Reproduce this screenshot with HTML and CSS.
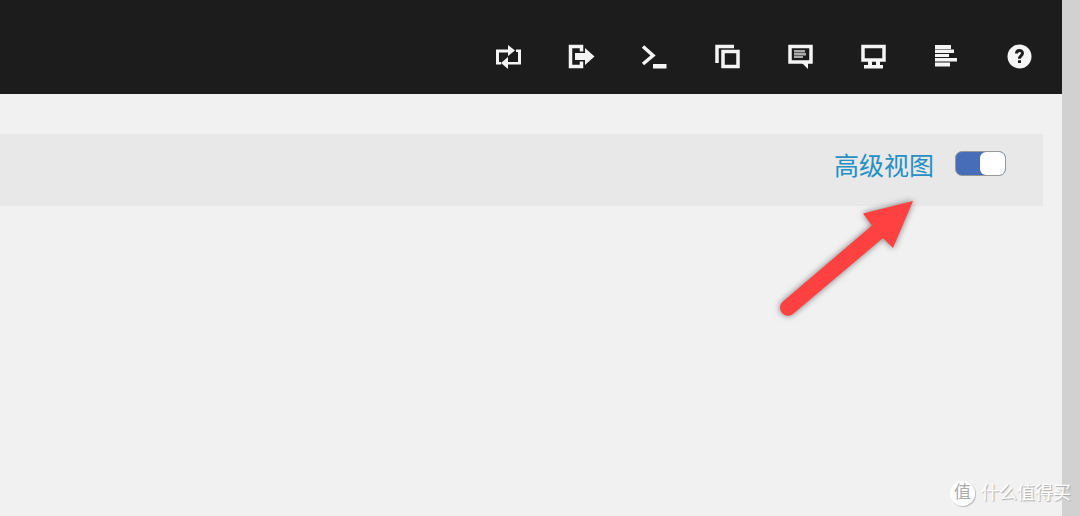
FILE: index.html
```html
<!DOCTYPE html>
<html lang="zh-CN">
<head>
    <meta charset="UTF-8">
    <meta name="viewport" content="width=device-width, initial-scale=1.0">
    <title>高级视图</title>
    <link rel="stylesheet" href="styles.css">
</head>
<body>
    <div class="page">
        <header class="header">
            <button type="button" class="icon-btn" aria-label="切换">
                <svg viewBox="0 0 26 26"><path d="M1 6.500h12V2l7 5.500-7 5.500V9.500H4V19h2v2.500H1zM26 21.500H13V26l-7-6 7-6v5h10V9h-2V6.500h5z"/></svg>
            </button>
            <button type="button" class="icon-btn" aria-label="退出">
                <svg viewBox="0 0 26 26"><path class="line" d="M13.500 8.500V3.500H2.500V23.500H13.500V18.500"/><path d="M7 10h10V5l9.500 8.500L17 22v-5H7z"/></svg>
            </button>
            <button type="button" class="icon-btn" aria-label="终端">
                <svg viewBox="0 0 26 26"><path class="line" d="M2 3.500L12 12.500 2 21"/><path d="M12 21h13.500v4.500H12z"/></svg>
            </button>
            <button type="button" class="icon-btn" aria-label="复制">
                <svg viewBox="0 0 26 26"><path class="line" d="M3 20V3.500H20M9 8.500h15v15H9z"/></svg>
            </button>
            <button type="button" class="icon-btn" aria-label="反馈">
                <svg viewBox="0 0 26 26"><path class="line" d="M3 3.500h21v15.500H3z"/><path d="M14 19h7v7z"/><path class="dim" d="M7 7h11v2.500H7zM7 10h12v2.500H7zM7 13h9v2H7z"/></svg>
            </button>
            <button type="button" class="icon-btn" aria-label="信息">
                <svg viewBox="0 0 26 26"><path class="line" d="M3 3.500h21v13.500H3z"/><path d="M8 18h4v4h4v-4h4v4h3v3.500H4V22h4z"/></svg>
            </button>
            <button type="button" class="icon-btn" aria-label="日志">
                <svg viewBox="0 0 26 26"><path d="M2 2h16v4H2zM2 6.500h19V10H2zM2 11h14v3H2zM2 15h22v3.500H2zM2 19.500h15v4H2z"/></svg>
            </button>
            <button type="button" class="icon-btn" aria-label="帮助">
                <svg viewBox="0 0 26 26"><circle cx="13.500" cy="13.500" r="12"/><path class="mark" d="M10.500 10.500C10.500 6.500 16.500 6.500 16.500 10.200C16.500 12.500 13.500 12.700 13.500 15.700M13.500 17.300V20"/></svg>
            </button>
        </header>
        <main class="content">
            <div class="view-bar">
                <label for="advanced-view">高级视图</label>
                <input type="checkbox" id="advanced-view" class="switch" checked>
            </div>
        </main>
    </div>
    <div class="scrollbar"></div>

    <!-- arrow pointing at the switch -->
    <svg class="pointer" viewBox="0 0 160 135">
        <path d="M148 11L98 23.500 107 35.500 18 111.500A8 8 0 0 0 28 124L118 48 128 58z"/>
    </svg>

    <div class="watermark">
        <span class="badge">值</span>
        <span>什么值得买</span>
    </div>
</body>
</html>
```
FILE: styles.css
```css
* {
    box-sizing: border-box;
}

body {
    margin: 0;
    min-height: 100vh;
    display: flex;
    position: relative;
    background: #f1f1f1;
    font-family: "Liberation Sans", "Noto Sans CJK SC", sans-serif;
}

.page {
    flex: 1;
}

.header {
    display: flex;
    justify-content: flex-end;
    gap: 47px;
    padding: 43px 30px 25px;
    background: #1c1c1c;
}

.icon-btn {
    width: 26px;
    height: 26px;
    padding: 0;
    border: none;
    background: none;
    cursor: pointer;
}

.icon-btn svg {
    display: block;
    overflow: visible;
    fill: #f4f4f4;
}

.icon-btn .line {
    fill: none;
    stroke: #f4f4f4;
    stroke-width: 3.5;
}

.icon-btn .dim {
    fill: #aaa;
}

.icon-btn .mark {
    fill: none;
    stroke: #1c1c1c;
    stroke-width: 3;
}

.content {
    padding: 40px 19px 40px 0;
}

.view-bar {
    display: flex;
    justify-content: flex-end;
    align-items: flex-start;
    gap: 21px;
    height: 72px;
    padding: 17px 37px 0 0;
    background: #e8e8e8;
}

.view-bar label {
    font-size: 25px;
    line-height: 30px;
    color: #2490c4;
}

.switch {
    appearance: none;
    display: flex;
    justify-content: flex-end;
    width: 51px;
    height: 25px;
    margin: 0;
    border: 1px solid #999;
    border-radius: 7px;
    background: #486db8;
    cursor: pointer;
}

.switch::before {
    content: "";
    width: 25px;
    border-radius: 6px;
    background: #fff;
}

.switch:not(:checked) {
    justify-content: flex-start;
    background: #ccc;
}

.scrollbar {
    width: 18px;
    background: #d1d1d1;
}

.pointer {
    position: absolute;
    top: 190px;
    right: 155px;
    width: 160px;
    height: 135px;
    fill: #ff4241;
    filter: drop-shadow(0 0 3px rgba(0, 0, 0, 0.5));
    pointer-events: none;
}

.watermark {
    position: absolute;
    right: 9px;
    bottom: 10px;
    display: flex;
    align-items: center;
    gap: 6px;
    font-size: 18px;
    line-height: 26px;
    color: #fff;
    text-shadow: 1px 1px 1px #aaa;
}

.badge {
    width: 25px;
    height: 25px;
    border-radius: 50%;
    background: #fff;
    box-shadow: 1px 1px 1px #bbb;
    color: #aaa;
    font-size: 17px;
    text-align: center;
    text-shadow: none;
    line-height: 24px;
}
```
